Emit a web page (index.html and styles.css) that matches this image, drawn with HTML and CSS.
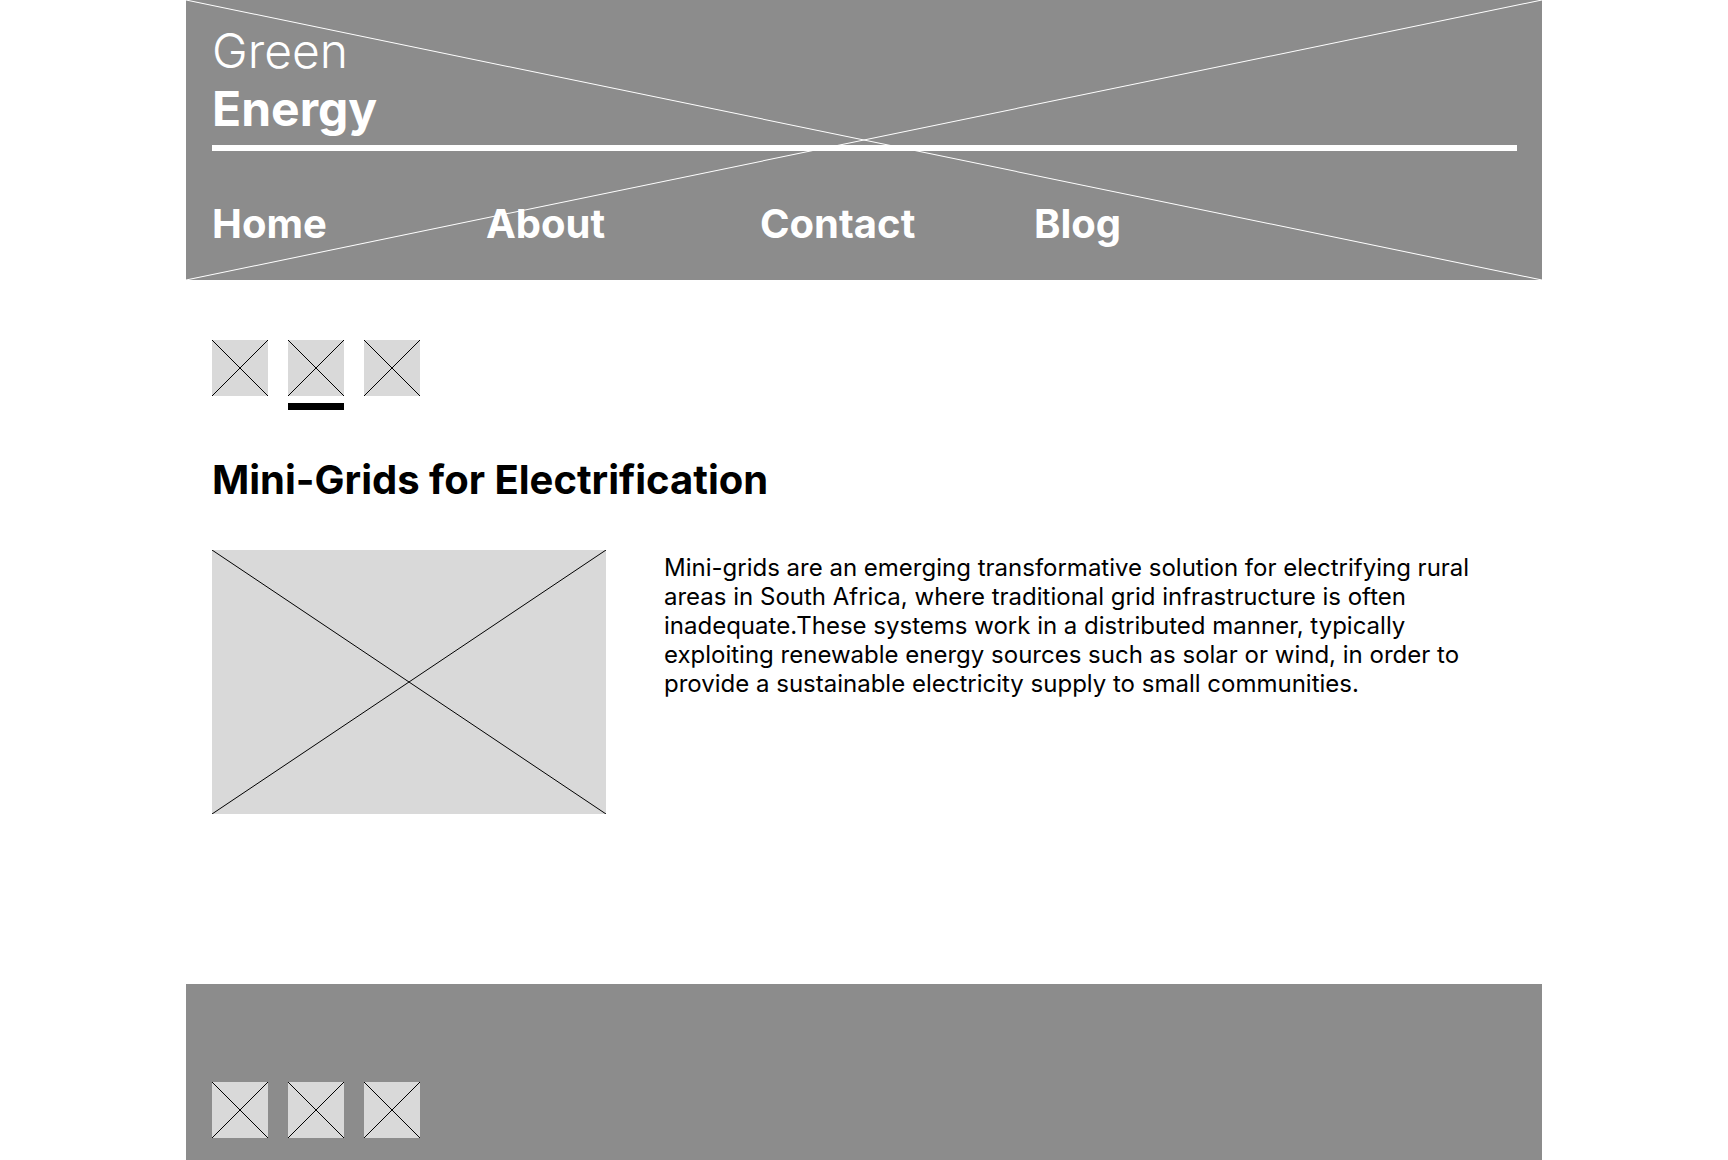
FILE: index.html
```html
<!DOCTYPE html>
<html lang="en">
<head>
<meta charset="utf-8">
<title>Green Energy</title>
<link rel="stylesheet" href="styles.css">
</head>
<body>
<div class="page">
  <header class="site-header">
    <svg class="cross cross-header" viewBox="0 0 100 100" preserveAspectRatio="none" aria-hidden="true">
      <line x1="0" y1="0" x2="100" y2="100"/>
      <line x1="100" y1="0" x2="0" y2="100"/>
    </svg>
    <div class="brand">
      <span class="brand-light">Green</span>
      <span class="brand-bold">Energy</span>
    </div>
    <div class="brand-rule"></div>
    <nav class="nav">
      <a href="#">Home</a>
      <a href="#">About</a>
      <a href="#">Contact</a>
      <a href="#">Blog</a>
    </nav>
  </header>

  <main class="content">
    <div class="thumbs">
      <div class="thumb-item">
        <svg class="ph ph-thumb" viewBox="0 0 100 100" preserveAspectRatio="none"><line x1="0" y1="0" x2="100" y2="100"/><line x1="100" y1="0" x2="0" y2="100"/></svg>
      </div>
      <div class="thumb-item active">
        <svg class="ph ph-thumb" viewBox="0 0 100 100" preserveAspectRatio="none"><line x1="0" y1="0" x2="100" y2="100"/><line x1="100" y1="0" x2="0" y2="100"/></svg>
        <div class="thumb-bar"></div>
      </div>
      <div class="thumb-item">
        <svg class="ph ph-thumb" viewBox="0 0 100 100" preserveAspectRatio="none"><line x1="0" y1="0" x2="100" y2="100"/><line x1="100" y1="0" x2="0" y2="100"/></svg>
      </div>
    </div>

    <h1 class="title">Mini-Grids for Electrification</h1>

    <section class="article">
      <svg class="ph ph-image" viewBox="0 0 100 100" preserveAspectRatio="none"><line x1="0" y1="0" x2="100" y2="100"/><line x1="100" y1="0" x2="0" y2="100"/></svg>
      <p class="article-text">Mini-grids are an emerging transformative solution for electrifying rural areas in South Africa, where traditional grid infrastructure is often inadequate.These systems work in a distributed manner, typically exploiting renewable energy sources such as solar or wind, in order to provide a sustainable electricity supply to small communities.</p>
    </section>
  </main>

  <footer class="site-footer">
    <div class="social">
      <svg class="ph ph-thumb" viewBox="0 0 100 100" preserveAspectRatio="none"><line x1="0" y1="0" x2="100" y2="100"/><line x1="100" y1="0" x2="0" y2="100"/></svg>
      <svg class="ph ph-thumb" viewBox="0 0 100 100" preserveAspectRatio="none"><line x1="0" y1="0" x2="100" y2="100"/><line x1="100" y1="0" x2="0" y2="100"/></svg>
      <svg class="ph ph-thumb" viewBox="0 0 100 100" preserveAspectRatio="none"><line x1="0" y1="0" x2="100" y2="100"/><line x1="100" y1="0" x2="0" y2="100"/></svg>
    </div>
  </footer>
</div>
</body>
</html>
```

FILE: styles.css
```css
* { box-sizing: border-box; }

html, body {
  margin: 0;
  padding: 0;
  background: #ffffff;
  font-family: Inter, "Noto Sans", "Liberation Sans", sans-serif;
  color: #000;
}

.page {
  width: 1356px;
  margin: 0 auto;
}

/* Header */
.site-header {
  position: relative;
  height: 280px;
  background: #8c8c8c;
  padding: 22px 25px 0 26px;
  display: flex;
  flex-direction: column;
  overflow: hidden;
}

.cross {
  position: absolute;
  inset: 0;
  width: 100%;
  height: 100%;
}

.cross line {
  stroke: #ffffff;
  stroke-width: 1;
  vector-effect: non-scaling-stroke;
}

.brand {
  position: relative;
  display: flex;
  flex-direction: column;
  color: #fff;
  font-size: 48px;
  line-height: 58px;
}

.brand-light { font-weight: 300; }
.brand-bold { font-weight: 700; }

.brand-rule {
  position: relative;
  height: 6px;
  background: #fff;
  margin-top: 7px;
}

.nav {
  position: relative;
  display: flex;
  margin-top: 49px;
}

.nav a {
  width: 274px;
  color: #fff;
  text-decoration: none;
  font-size: 40px;
  font-weight: 700;
  line-height: 48px;
}

/* Placeholders */
.ph {
  display: block;
  flex: none;
  background: #d9d9d9;
}

.ph line {
  stroke: #000;
  stroke-width: 1;
  vector-effect: non-scaling-stroke;
}

.ph-thumb {
  width: 56px;
  height: 56px;
}

/* Main */
.content {
  height: 704px;
  padding: 60px 26px 0 26px;
}

.thumbs {
  display: flex;
  align-items: flex-start;
  gap: 20px;
}

.thumb-item {
  display: flex;
  flex-direction: column;
}

.thumb-bar {
  width: 56px;
  height: 7px;
  background: #000;
  margin-top: 7px;
}

.title {
  margin: 46px 0 0 0;
  font-size: 40px;
  font-weight: 700;
  line-height: 48px;
}

.article {
  display: flex;
  align-items: flex-start;
  gap: 58px;
  margin-top: 46px;
}

.ph-image {
  width: 394px;
  height: 264px;
}

.article-text {
  margin: 3px 0 0 0;
  width: 830px;
  font-size: 24px;
  line-height: 29px;
  font-weight: 400;
}

/* Footer */
.site-footer {
  height: 176px;
  background: #8c8c8c;
  padding: 98px 26px 0 26px;
}

.social {
  display: flex;
  gap: 20px;
}
```
